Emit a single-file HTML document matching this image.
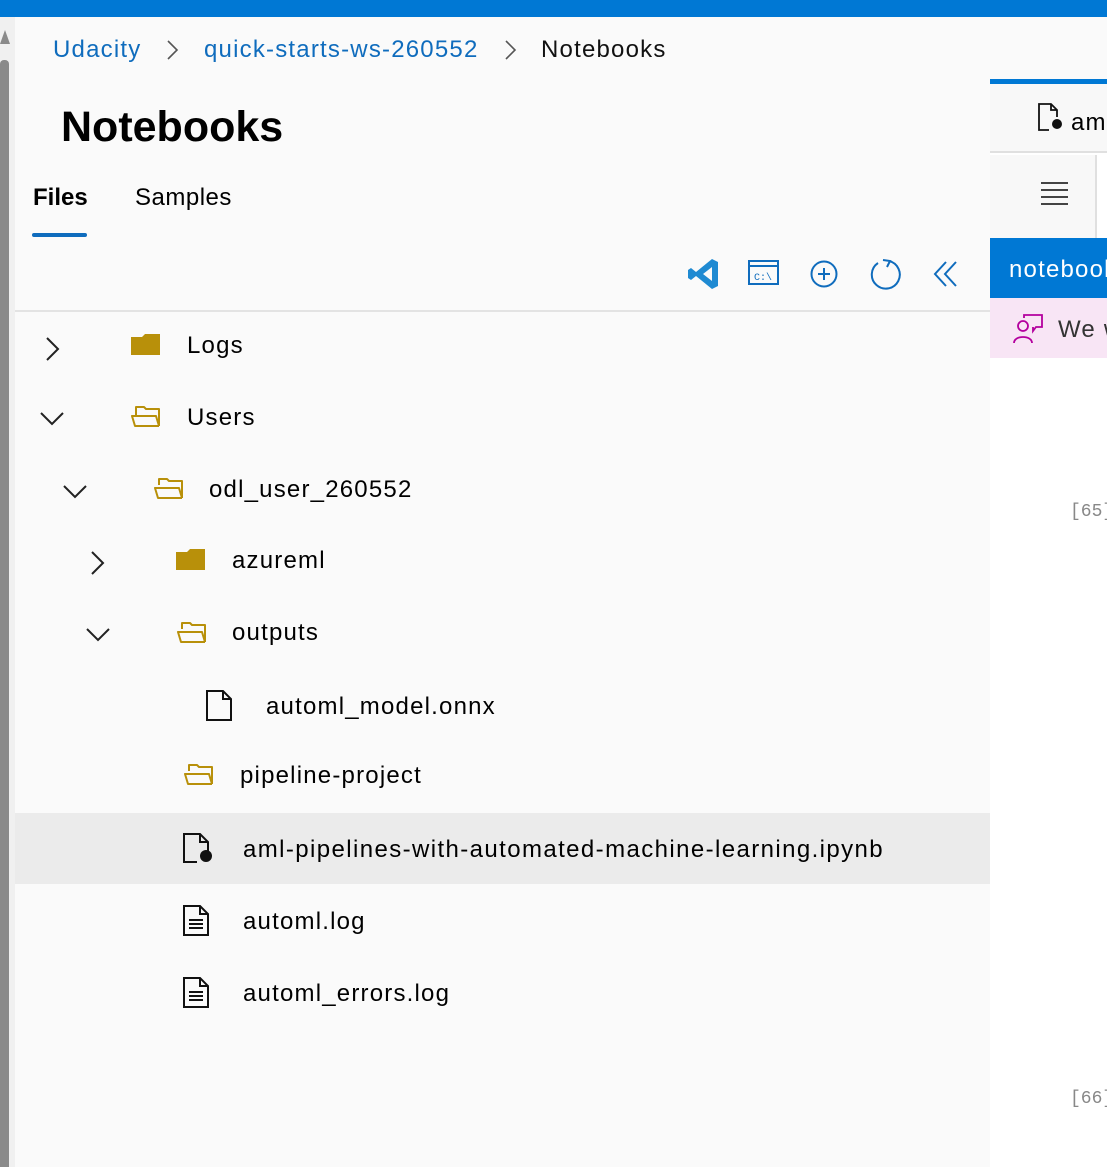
<!DOCTYPE html>
<html><head><style>
*{margin:0;padding:0;box-sizing:border-box}
body{width:1107px;height:1167px;overflow:hidden;background:#fafafa;font-family:"Liberation Sans",sans-serif;position:relative;color:#000}
.a{position:absolute}
.t{position:absolute;font-size:24px;white-space:nowrap;line-height:30px;letter-spacing:1.2px}
</style></head><body>
<div class="a" style="left:0;top:0;width:1107px;height:17px;background:#0078d4"></div>
<div class="a" style="left:0;top:17px;width:15px;height:1150px;background:#f0f0f0"></div>
<div class="a" style="left:0;top:60px;width:9px;height:1107px;background:#8a8a8a;border-radius:4px 4px 0 0"></div>
<div class="a" style="left:0;top:30px;width:0;height:0;border-left:5px solid transparent;border-right:5px solid transparent;border-bottom:14px solid #8a8a8a"></div>

<div class="t" style="left:53px;top:35px;color:#0f6cbd">Udacity</div>
<svg class="a" style="left:166px;top:39px" width="14" height="22"><path d="M2 2 L11 11 L2 20" fill="none" stroke="#555" stroke-width="1.6"/></svg>
<div class="t" style="left:204px;top:35px;color:#0f6cbd">quick-starts-ws-260552</div>
<svg class="a" style="left:504px;top:39px" width="14" height="22"><path d="M2 2 L11 11 L2 20" fill="none" stroke="#555" stroke-width="1.6"/></svg>
<div class="t" style="left:541px;top:35px;color:#111">Notebooks</div>

<div class="t" style="left:61px;top:101px;font-size:43px;line-height:52px;font-weight:bold;letter-spacing:0">Notebooks</div>
<div class="t" style="left:33px;top:183px;font-weight:bold;letter-spacing:0">Files</div>
<div class="a" style="left:32px;top:233px;width:55px;height:4px;background:#0f6cbd;border-radius:2px"></div>
<div class="t" style="left:135px;top:183px;letter-spacing:0.5px">Samples</div>

<svg class="a" style="left:686px;top:256px" width="36" height="36" viewBox="0 0 36 36"><path d="M26 3 L32 6 V30 L26 33 L10 20 L5 24 L2 22 V14 L5 12 L10 16 L26 3Z M26 11 L17 18 L26 25Z" fill="#1f8ad2" fill-rule="evenodd"/></svg>
<svg class="a" style="left:748px;top:259px" width="32" height="28"><rect x="1" y="2" width="29" height="23" fill="none" stroke="#0f6cbd" stroke-width="2"/><line x1="1" y1="7" x2="30" y2="7" stroke="#0f6cbd" stroke-width="2"/><text x="6" y="21" font-size="10" fill="#0f6cbd" font-family="Liberation Mono">C:\</text></svg>
<svg class="a" style="left:809px;top:259px" width="30" height="30"><circle cx="15" cy="15" r="12.5" fill="none" stroke="#0f6cbd" stroke-width="2"/><path d="M15 9V21M9 15H21" stroke="#0f6cbd" stroke-width="2"/></svg>
<svg class="a" style="left:867px;top:256px" width="36" height="36"><path d="M11 7 A14 14 0 1 0 22 5" fill="none" stroke="#0f6cbd" stroke-width="2"/><path d="M16 4 L23 5 L20 11" fill="none" stroke="#0f6cbd" stroke-width="2"/></svg>
<svg class="a" style="left:932px;top:260px" width="28" height="28"><path d="M14 2 L3 14 L14 26 M24 2 L13 14 L24 26" fill="none" stroke="#0f6cbd" stroke-width="2"/></svg>
<div class="a" style="left:15px;top:310px;width:975px;height:2px;background:#e3e3e3"></div>

<div class="a" style="left:15px;top:813px;width:975px;height:71px;background:#ebebeb"></div>

<svg class="a" style="left:44px;top:336px" width="20" height="26"><path d="M3 2 L14 13 L3 24" fill="none" stroke="#222" stroke-width="2"/></svg>
<svg class="a" style="left:39px;top:410px" width="26" height="16"><path d="M2 3 L13 14 L24 3" fill="none" stroke="#222" stroke-width="2"/></svg>
<svg class="a" style="left:62px;top:483px" width="26" height="16"><path d="M2 3 L13 14 L24 3" fill="none" stroke="#222" stroke-width="2"/></svg>
<svg class="a" style="left:89px;top:550px" width="20" height="26"><path d="M3 2 L14 13 L3 24" fill="none" stroke="#222" stroke-width="2"/></svg>
<svg class="a" style="left:85px;top:626px" width="26" height="16"><path d="M2 3 L13 14 L24 3" fill="none" stroke="#222" stroke-width="2"/></svg>

<svg class="a" style="left:131px;top:334px" width="30" height="22"><path d="M0 3H11L14 0H29V21H0Z" fill="#b8900a"/></svg>
<svg class="a" style="left:176px;top:549px" width="30" height="22"><path d="M0 3H11L14 0H29V21H0Z" fill="#b8900a"/></svg>
<svg class="a" style="left:131px;top:404px" width="32" height="26"><path d="M5 9V3H13L15 5H28V22 M28 22H4L1 12H25L28 22" fill="none" stroke="#b8900a" stroke-width="2" stroke-linejoin="round"/><path d="M5 12V9" stroke="#b8900a" stroke-width="2"/></svg>
<svg class="a" style="left:154px;top:476px" width="32" height="26"><path d="M5 9V3H13L15 5H28V22 M28 22H4L1 12H25L28 22" fill="none" stroke="#b8900a" stroke-width="2" stroke-linejoin="round"/></svg>
<svg class="a" style="left:177px;top:620px" width="32" height="26"><path d="M5 9V3H13L15 5H28V22 M28 22H4L1 12H25L28 22" fill="none" stroke="#b8900a" stroke-width="2" stroke-linejoin="round"/></svg>
<svg class="a" style="left:184px;top:762px" width="32" height="26"><path d="M5 9V3H13L15 5H28V22 M28 22H4L1 12H25L28 22" fill="none" stroke="#b8900a" stroke-width="2" stroke-linejoin="round"/></svg>

<svg class="a" style="left:206px;top:690px" width="28" height="32"><path d="M1 1H17L25 9V30H1Z M17 1V9H25" fill="none" stroke="#111" stroke-width="2"/></svg>
<svg class="a" style="left:183px;top:833px" width="32" height="32"><path d="M14 29H1V1H17L25 9V18 M17 1V9H25" fill="none" stroke="#111" stroke-width="2"/><circle cx="23" cy="23" r="6" fill="#111"/></svg>
<svg class="a" style="left:183px;top:905px" width="28" height="32"><path d="M1 1H17L25 9V30H1Z M17 1V9H25 M6 15H20M6 19H20M6 23H20" fill="none" stroke="#111" stroke-width="2"/></svg>
<svg class="a" style="left:183px;top:977px" width="28" height="32"><path d="M1 1H17L25 9V30H1Z M17 1V9H25 M6 15H20M6 19H20M6 23H20" fill="none" stroke="#111" stroke-width="2"/></svg>

<div class="t" style="left:187px;top:331px">Logs</div>
<div class="t" style="left:187px;top:403px">Users</div>
<div class="t" style="left:209px;top:475px">odl_user_260552</div>
<div class="t" style="left:232px;top:546px">azureml</div>
<div class="t" style="left:232px;top:618px">outputs</div>
<div class="t" style="left:266px;top:692px">automl_model.onnx</div>
<div class="t" style="left:240px;top:761px">pipeline-project</div>
<div class="t" style="left:243px;top:835px;letter-spacing:1.4px">aml-pipelines-with-automated-machine-learning.ipynb</div>
<div class="t" style="left:243px;top:907px">automl.log</div>
<div class="t" style="left:243px;top:979px">automl_errors.log</div>

<div class="a" style="left:990px;top:79px;width:117px;height:1088px;background:#fff"></div>
<div class="a" style="left:990px;top:79px;width:117px;height:5px;background:#0078d4"></div>
<div class="a" style="left:990px;top:84px;width:117px;height:69px;background:#f8f8f8;border-bottom:2px solid #e0e0e0"></div>
<svg class="a" style="left:1038px;top:103px" width="28" height="30"><path d="M11 27H1V1H13L19 7V14 M13 1V7H19" fill="none" stroke="#111" stroke-width="1.8"/><circle cx="19" cy="21" r="5" fill="#111"/></svg>
<div class="t" style="left:1071px;top:108px">am</div>
<div class="a" style="left:990px;top:155px;width:107px;height:83px;background:#f8f8f8;border-right:2px solid #e0e0e0"></div>
<div class="a" style="left:1041px;top:182px;width:27px;height:2px;background:#444"></div>
<div class="a" style="left:1041px;top:189px;width:27px;height:2px;background:#444"></div>
<div class="a" style="left:1041px;top:196px;width:27px;height:2px;background:#444"></div>
<div class="a" style="left:1041px;top:203px;width:27px;height:2px;background:#444"></div>
<div class="a" style="left:990px;top:238px;width:117px;height:60px;background:#0078d4"></div>
<div class="t" style="left:1009px;top:255px;color:#fff">notebooks</div>
<div class="a" style="left:990px;top:298px;width:117px;height:60px;background:#f8e5f5"></div>
<svg class="a" style="left:1012px;top:313px" width="32" height="32"><circle cx="11" cy="13" r="5" fill="none" stroke="#b4009e" stroke-width="1.8"/><path d="M2 30C2 22 20 22 20 30" fill="none" stroke="#b4009e" stroke-width="1.8"/><path d="M12 5V2H30V14H24L21 18V14" fill="none" stroke="#b4009e" stroke-width="1.8"/></svg>
<div class="t" style="left:1058px;top:315px;color:#333">We w</div>
<div class="t" style="left:1070px;top:497px;font-family:'Liberation Mono',monospace;font-size:18px;color:#888;letter-spacing:0">[65]</div>
<div class="t" style="left:1070px;top:1084px;font-family:'Liberation Mono',monospace;font-size:18px;color:#888;letter-spacing:0">[66]</div>
</body></html>
